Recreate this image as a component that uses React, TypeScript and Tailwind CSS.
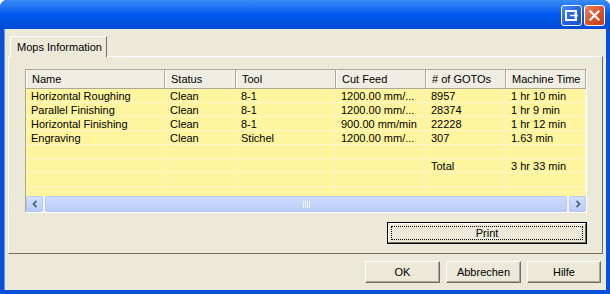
import React from 'react';

type Row = {
  name: string;
  status: string;
  tool: string;
  feed: string;
  gotos: string;
  time: string;
};

const rows: Row[] = [
  { name: 'Horizontal Roughing', status: 'Clean', tool: '8-1', feed: '1200.00 mm/...', gotos: '8957', time: '1 hr 10 min' },
  { name: 'Parallel Finishing', status: 'Clean', tool: '8-1', feed: '1200.00 mm/...', gotos: '28374', time: '1 hr 9 min' },
  { name: 'Horizontal Finishing', status: 'Clean', tool: '8-1', feed: '900.00 mm/min', gotos: '22228', time: '1 hr 12 min' },
  { name: 'Engraving', status: 'Clean', tool: 'Stichel', feed: '1200.00 mm/...', gotos: '307', time: '1.63 min' },
  { name: '', status: '', tool: '', feed: '', gotos: '', time: '' },
  { name: '', status: '', tool: '', feed: '', gotos: 'Total', time: '3 hr 33 min' },
  { name: '', status: '', tool: '', feed: '', gotos: '', time: '' },
  { name: '', status: '', tool: '', feed: '', gotos: '', time: '' },
];

const columns = [
  { label: 'Name', w: 'w-[139px]' },
  { label: 'Status', w: 'w-[71px]' },
  { label: 'Tool', w: 'w-[100px]' },
  { label: 'Cut Feed', w: 'w-[90px]' },
  { label: '# of GOTOs', w: 'w-[80px]' },
  { label: 'Machine Time', w: 'flex-1' },
];

function TitleButtons() {
  return (
    <div className="flex gap-[2px] pt-[5px] pr-[5px]">
      <div className="flex h-[21px] w-[21px] items-center justify-center rounded-[3px] border border-white bg-gradient-to-br from-[#4F8BF8] via-[#2663E6] to-[#1A4FCF]">
        <svg width="13" height="11" viewBox="0 0 13 11">
          <rect x="1" y="1" width="10" height="9" fill="none" stroke="#fff" strokeWidth="2" />
          <path d="M5 5.5h7M9.5 3l2.5 2.5-2.5 2.5" fill="none" stroke="#fff" strokeWidth="1.6" />
        </svg>
      </div>
      <div className="flex h-[21px] w-[21px] items-center justify-center rounded-[3px] border border-white bg-gradient-to-br from-[#E9876A] via-[#D8542C] to-[#C13A17]">
        <svg width="11" height="11" viewBox="0 0 11 11">
          <path d="M1.5 1.5l8 8M9.5 1.5l-8 8" stroke="#fff" strokeWidth="2.2" strokeLinecap="square" />
        </svg>
      </div>
    </div>
  );
}

function ClassicButton({ label, isDefault = false, w }: { label: string; isDefault?: boolean; w: string }) {
  if (isDefault) {
    return (
      <div className={`${w} h-[22px] border border-black bg-[#ECE9D8]`}>
        <div className="h-full w-full border border-t-white border-l-white border-r-[#716F64] border-b-[#716F64] p-[2px]">
          <div className="flex h-full w-full items-center justify-center border border-dotted border-black text-[11px] leading-none">
            {label}
          </div>
        </div>
      </div>
    );
  }
  return (
    <div className={`${w} flex h-[22px] items-center justify-center border border-t-white border-l-white border-r-[#716F64] border-b-[#716F64] bg-[#ECE9D8] text-[11px] leading-none shadow-[inset_-1px_-1px_0_#ACA899]`}>
      {label}
    </div>
  );
}

function ScrollArrow({ dir }: { dir: 'left' | 'right' }) {
  return (
    <div className="flex h-[16px] w-[17px] items-center justify-center rounded-[2px] border border-[#B4C8F6] bg-gradient-to-b from-[#D5E2FD] to-[#B8CCF7]">
      <svg width="6" height="8" viewBox="0 0 6 8">
        {dir === 'left' ? (
          <path d="M4.5 0.8L1.5 4l3 3.2" fill="none" stroke="#4D6185" strokeWidth="1.8" />
        ) : (
          <path d="M1.5 0.8L4.5 4l-3 3.2" fill="none" stroke="#4D6185" strokeWidth="1.8" />
        )}
      </svg>
    </div>
  );
}

function MopsList() {
  return (
    <div className="flex h-[144px] flex-col border border-t-[#ACA899] border-l-[#ACA899] border-b-white border-r-white bg-white">
      <div className="flex h-[19px] shrink-0 border-b border-[#ACA899] bg-[#F0EEE4]">
        {columns.map((c) => (
          <div
            key={c.label}
            className={`${c.w} flex items-center border-r border-[#ACA899] pl-[6px] shadow-[inset_1px_0_0_#fff] text-[11px] leading-none`}
          >
            {c.label}
          </div>
        ))}
      </div>
      <div className="h-[107px] overflow-hidden bg-[#FFF59F]">
        {rows.map((r, i) => (
          <div key={i} className="flex h-[14px] border-b border-[#FCF7CF] text-[11px] leading-[13px]">
            {[r.name, r.status, r.tool, r.feed, r.gotos, r.time].map((v, j) => (
              <div key={j} className={`${columns[j].w} border-r border-[#FAF3C6] pt-[1px] pl-[5px] whitespace-nowrap`}>
                {v}
              </div>
            ))}
          </div>
        ))}
      </div>
      <div className="flex h-[16px] shrink-0 items-center gap-[1px] bg-[#F6F5F0]">
        <ScrollArrow dir="left" />
        <div className="mx-[1px] flex h-[16px] flex-1 items-center justify-center rounded-[2px] border border-[#B4C8F6] bg-gradient-to-b from-[#CDDBFD] to-[#B9CDF8]">
          <svg width="7" height="7" viewBox="0 0 7 7">
            <path d="M0.5 0v7M2.5 0v7M4.5 0v7M6.5 0v7" stroke="#EEF3FE" strokeWidth="1" />
          </svg>
        </div>
        <ScrollArrow dir="right" />
      </div>
    </div>
  );
}

export default function App() {
  return (
    <div className="flex h-[294px] w-[610px] flex-col overflow-hidden rounded-t-[7px] bg-[#0A4FD8] font-['Liberation_Sans',Arial,sans-serif] text-black">
      <div className="flex h-[29px] shrink-0 justify-end bg-gradient-to-b from-[#3A8CF7] via-[#0058EE] to-[#004CD8]">
        <TitleButtons />
      </div>
      <div className="mx-[4px] mb-[4px] flex flex-1 flex-col border-l border-[#6F98EF] bg-[#ECE9D8]">
        <div className="flex pt-[7px] pl-[5px]">
          <div className="z-10 -mb-px flex h-[21px] w-[97px] items-center border border-b-0 border-t-white border-l-white border-r-[#716F64] bg-[#ECE9D8] pl-[6px] text-[11px] leading-none">
            Mops Information
          </div>
        </div>
        <div className="mx-[3px] flex h-[198px] flex-col border border-t-white border-l-white border-r-[#716F64] border-b-[#716F64] pt-[12px] pr-[15px] pb-[9px] pl-[16px]">
          <MopsList />
          <div className="mt-[9px] flex justify-end">
            <ClassicButton label="Print" isDefault w="w-[200px]" />
          </div>
        </div>
        <div className="flex justify-end gap-[6px] pt-[7px] pr-[5px]">
          <ClassicButton label="OK" w="w-[75px]" />
          <ClassicButton label="Abbrechen" w="w-[75px]" />
          <ClassicButton label="Hilfe" w="w-[74px]" />
        </div>
      </div>
    </div>
  );
}
